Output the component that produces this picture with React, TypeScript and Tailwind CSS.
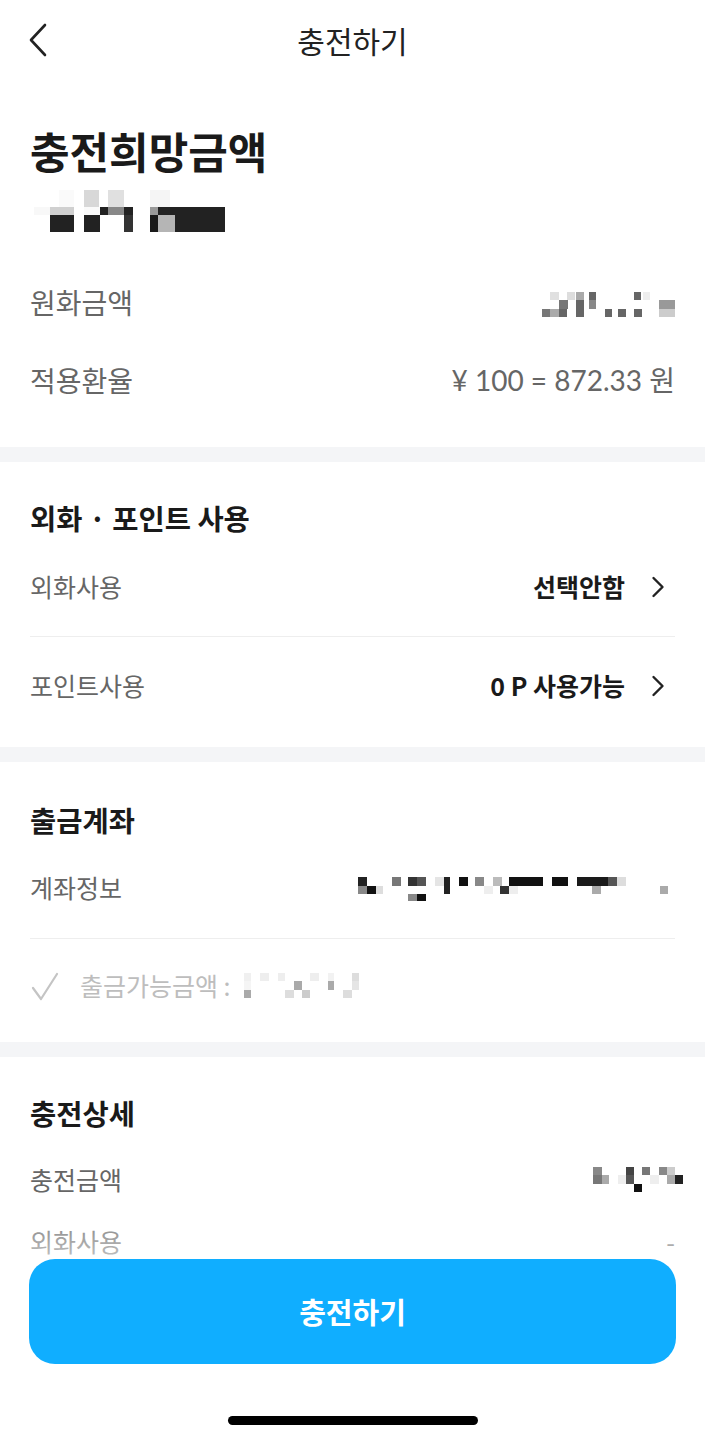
import React from "react";

type Cell = [number, number, number, number, string];

function Mosaic({ w, h, cells, ox, oy }: { w: number; h: number; cells: Cell[]; ox: number; oy: number }) {
  return (
    <svg width={w} height={h} viewBox={`0 0 ${w} ${h}`} className="block shrink-0">
      {cells.map(([x1, y1, x2, y2, c], i) => (
        <rect key={i} x={x1 - ox} y={y1 - oy} width={x2 - x1} height={y2 - y1} fill={c} />
      ))}
    </svg>
  );
}

const topCells: Cell[] = [
  [59, 190, 74, 207, "#fafafa"],
  [84, 190, 99, 207, "#d8d8d8"],
  [108, 190, 124, 207, "#e0e0e0"],
  [150, 190, 170, 207, "#f5f5f5"],
  [34, 207, 50, 215, "#f8f8f8"],
  [50, 207, 74, 215, "#d0d0d0"],
  [84, 207, 100, 215, "#fafafa"],
  [100, 207, 108, 215, "#222"],
  [108, 207, 124, 215, "#888"],
  [124, 207, 133, 215, "#222"],
  [150, 207, 158, 215, "#999"],
  [158, 207, 225, 215, "#222"],
  [50, 215, 74, 232, "#222"],
  [84, 215, 100, 232, "#222"],
  [124, 215, 133, 232, "#333"],
  [150, 215, 158, 232, "#1a1a1a"],
  [158, 215, 175, 232, "#b5b5b5"],
  [175, 215, 225, 232, "#222"],
];

const wonCells: Cell[] = [
  [551, 290, 560, 298, "#e0e0e0"],
  [568, 290, 576, 298, "#ddd"],
  [577, 290, 585, 298, "#aaa"],
  [590, 290, 597, 298, "#666"],
  [635, 290, 642, 298, "#666"],
  [644, 290, 651, 298, "#eee"],
  [560, 298, 569, 307, "#777"],
  [577, 298, 585, 307, "#666"],
  [590, 298, 597, 307, "#888"],
  [660, 298, 676, 307, "#999"],
  [543, 307, 551, 315, "#777"],
  [551, 307, 560, 315, "#aaa"],
  [560, 307, 568, 315, "#666"],
  [577, 307, 585, 315, "#666"],
  [606, 307, 613, 315, "#666"],
  [619, 307, 627, 315, "#666"],
  [635, 307, 643, 315, "#666"],
  [660, 307, 676, 315, "#ccc"],
];

const acctCells: Cell[] = [
  [358, 873, 367, 882, "#222"],
  [392, 873, 401, 882, "#777"],
  [408, 873, 417, 882, "#333"],
  [417, 873, 426, 882, "#555"],
  [435, 873, 444, 882, "#e5e5e5"],
  [444, 873, 450, 882, "#222"],
  [459, 873, 468, 882, "#111"],
  [475, 873, 484, 882, "#888"],
  [493, 873, 502, 882, "#bbb"],
  [509, 873, 543, 882, "#111"],
  [552, 873, 568, 882, "#111"],
  [577, 873, 608, 882, "#1a1a1a"],
  [608, 873, 617, 882, "#555"],
  [617, 873, 626, 882, "#ddd"],
  [358, 882, 367, 890, "#888"],
  [367, 882, 376, 890, "#111"],
  [376, 882, 383, 890, "#ddd"],
  [444, 882, 450, 890, "#222"],
  [484, 882, 493, 890, "#eee"],
  [500, 882, 509, 890, "#333"],
  [509, 882, 518, 890, "#eee"],
  [592, 882, 601, 890, "#aaa"],
  [660, 882, 668, 890, "#aaa"],
  [408, 890, 417, 897, "#888"],
  [417, 890, 426, 897, "#111"],
];

const availCells: Cell[] = [
  [243, 965, 250, 973, "#f0f0f0"],
  [259, 965, 268, 973, "#eee"],
  [277, 965, 284, 973, "#eee"],
  [309, 965, 318, 973, "#eee"],
  [327, 965, 333, 973, "#f2f2f2"],
  [351, 965, 358, 973, "#ddd"],
  [243, 973, 250, 982, "#f5f5f5"],
  [293, 973, 301, 982, "#aaa"],
  [327, 973, 333, 982, "#aaa"],
  [351, 973, 358, 982, "#e5e5e5"],
  [243, 982, 250, 990, "#aaa"],
  [284, 982, 293, 990, "#ddd"],
  [301, 982, 309, 990, "#ccc"],
  [342, 982, 351, 990, "#ddd"],
];

const chargeCells: Cell[] = [
  [594, 1165, 603, 1173, "#888"],
  [627, 1165, 635, 1173, "#444"],
  [643, 1165, 651, 1173, "#777"],
  [660, 1165, 668, 1173, "#888"],
  [668, 1165, 676, 1173, "#ccc"],
  [594, 1173, 603, 1182, "#777"],
  [603, 1173, 610, 1182, "#aaa"],
  [619, 1173, 627, 1182, "#eee"],
  [627, 1173, 635, 1182, "#555"],
  [651, 1173, 660, 1182, "#eee"],
  [668, 1173, 676, 1182, "#aaa"],
  [676, 1173, 684, 1182, "#222"],
  [635, 1182, 643, 1190, "#111"],
];

function ChevronRight() {
  return (
    <svg width="14" height="22" viewBox="0 0 14 22" className="block">
      <path d="M2.5 2 L11.5 11 L2.5 20" fill="none" stroke="#222" strokeWidth="2.4" strokeLinecap="round" strokeLinejoin="round" />
    </svg>
  );
}

const font = { fontFamily: '"Noto Sans CJK KR", "Noto Sans", sans-serif' };

function Band() {
  return <div className="h-[15px] bg-[#f4f5f7]" />;
}

export default function App() {
  return (
    <div className="relative h-[1440px] overflow-hidden bg-white text-[#222]" style={font}>
      {/* Header */}
      <div className="grid h-[80px] grid-cols-[80px_1fr_80px] items-center">
        <div className="pl-[28px]">
          <svg width="20" height="34" viewBox="0 0 20 34" className="block">
            <path d="M17 2 L3 17 L17 32" fill="none" stroke="#222" strokeWidth="2.6" strokeLinecap="round" strokeLinejoin="round" />
          </svg>
        </div>
        <div className="text-center text-[30px] leading-none text-[#222]">충전하기</div>
        <div />
      </div>

      {/* Section 1 */}
      <div className="px-[30px] pt-[44px] pb-[28px]">
        <div className="text-[43px] font-bold leading-[52px] text-[#1a1a1a]">충전희망금액</div>
        <div className="mt-[14px]">
          <Mosaic w={200} h={42} ox={30} oy={190} cells={topCells} />
        </div>
        <div className="mt-[31px] flex h-[78px] items-center justify-between">
          <span className="text-[28px] text-[#666]">원화금액</span>
          <Mosaic w={136} h={34} ox={540} oy={283} cells={wonCells} />
        </div>
        <div className="flex h-[78px] items-center justify-between">
          <span className="text-[28px] text-[#666]">적용환율</span>
          <span className="text-[28px] text-[#666]" style={{ fontFamily: 'Lato, "Noto Sans CJK KR", sans-serif' }}>
            ¥ 100 = 872.33 원
          </span>
        </div>
      </div>

      <Band />

      {/* Section 2 */}
      <div className="px-[30px] pt-[38px] pb-[12px]">
        <div className="text-[28.5px] font-bold leading-[36px] text-[#1a1a1a]">외화 · 포인트 사용</div>
        <div className="mt-[2px] flex h-[99px] items-center justify-between border-b border-[#eeeeee]">
          <span className="text-[25px] text-[#666]">외화사용</span>
          <div className="flex items-center gap-[26px] pr-[10px]">
            <span className="text-[25px] font-bold text-[#1a1a1a]">선택안함</span>
            <ChevronRight />
          </div>
        </div>
        <div className="flex h-[98px] items-center justify-between">
          <span className="text-[25px] text-[#666]">포인트사용</span>
          <div className="flex items-center gap-[26px] pr-[10px]">
            <span className="text-[25px] font-bold text-[#1a1a1a]">0 P 사용가능</span>
            <ChevronRight />
          </div>
        </div>
      </div>

      <Band />

      {/* Section 3 */}
      <div className="px-[30px] pt-[40px] pb-[9px]">
        <div className="text-[28.5px] font-bold leading-[36px] text-[#1a1a1a]">출금계좌</div>
        <div className="flex h-[101px] items-center justify-between border-b border-[#eeeeee]">
          <span className="text-[25px] text-[#666]">계좌정보</span>
          <Mosaic w={320} h={28} ox={355} oy={870} cells={acctCells} />
        </div>
        <div className="flex h-[94px] items-center">
          <svg width="30" height="30" viewBox="0 0 30 30" className="mr-[20px] block shrink-0">
            <path d="M3 17 L11 28 L27 3" fill="none" stroke="#c4c4c4" strokeWidth="2.2" strokeLinecap="round" strokeLinejoin="round" />
          </svg>
          <span className="text-[25px] text-[#bdbdbd]">출금가능금액 :</span>
          <Mosaic w={130} h={26} ox={230} oy={965} cells={availCells} />
        </div>
      </div>

      <Band />

      {/* Section 4 */}
      <div className="px-[30px] pt-[38px] pb-[200px]">
        <div className="text-[28.5px] font-bold leading-[36px] text-[#1a1a1a]">충전상세</div>
        <div className="mt-[18px] flex h-[62px] items-center justify-between">
          <span className="text-[25px] text-[#666]">충전금액</span>
          <div className="-mr-[10px]">
            <Mosaic w={96} h={28} ox={590} oy={1164} cells={chargeCells} />
          </div>
        </div>
        <div className="flex h-[62px] items-center justify-between">
          <span className="text-[25px] text-[#666]">외화사용</span>
          <span className="text-[25px] text-[#666]">-</span>
        </div>
      </div>

      {/* Bottom fixed bar */}
      <div className="absolute bottom-0 left-0 right-0 bg-white">
        <div className="pointer-events-none absolute -top-[60px] left-0 right-0 h-[60px] bg-gradient-to-b from-white/0 to-white/60" />
        <div className="px-[29px]">
          <button className="flex h-[105px] w-full items-center justify-center rounded-[26px] bg-[#10aeff] text-[29px] font-bold text-white">
            충전하기
          </button>
        </div>
        <div className="flex justify-center pt-[52px] pb-[15px]">
          <div className="h-[9px] w-[250px] rounded-full bg-black" />
        </div>
      </div>
    </div>
  );
}
